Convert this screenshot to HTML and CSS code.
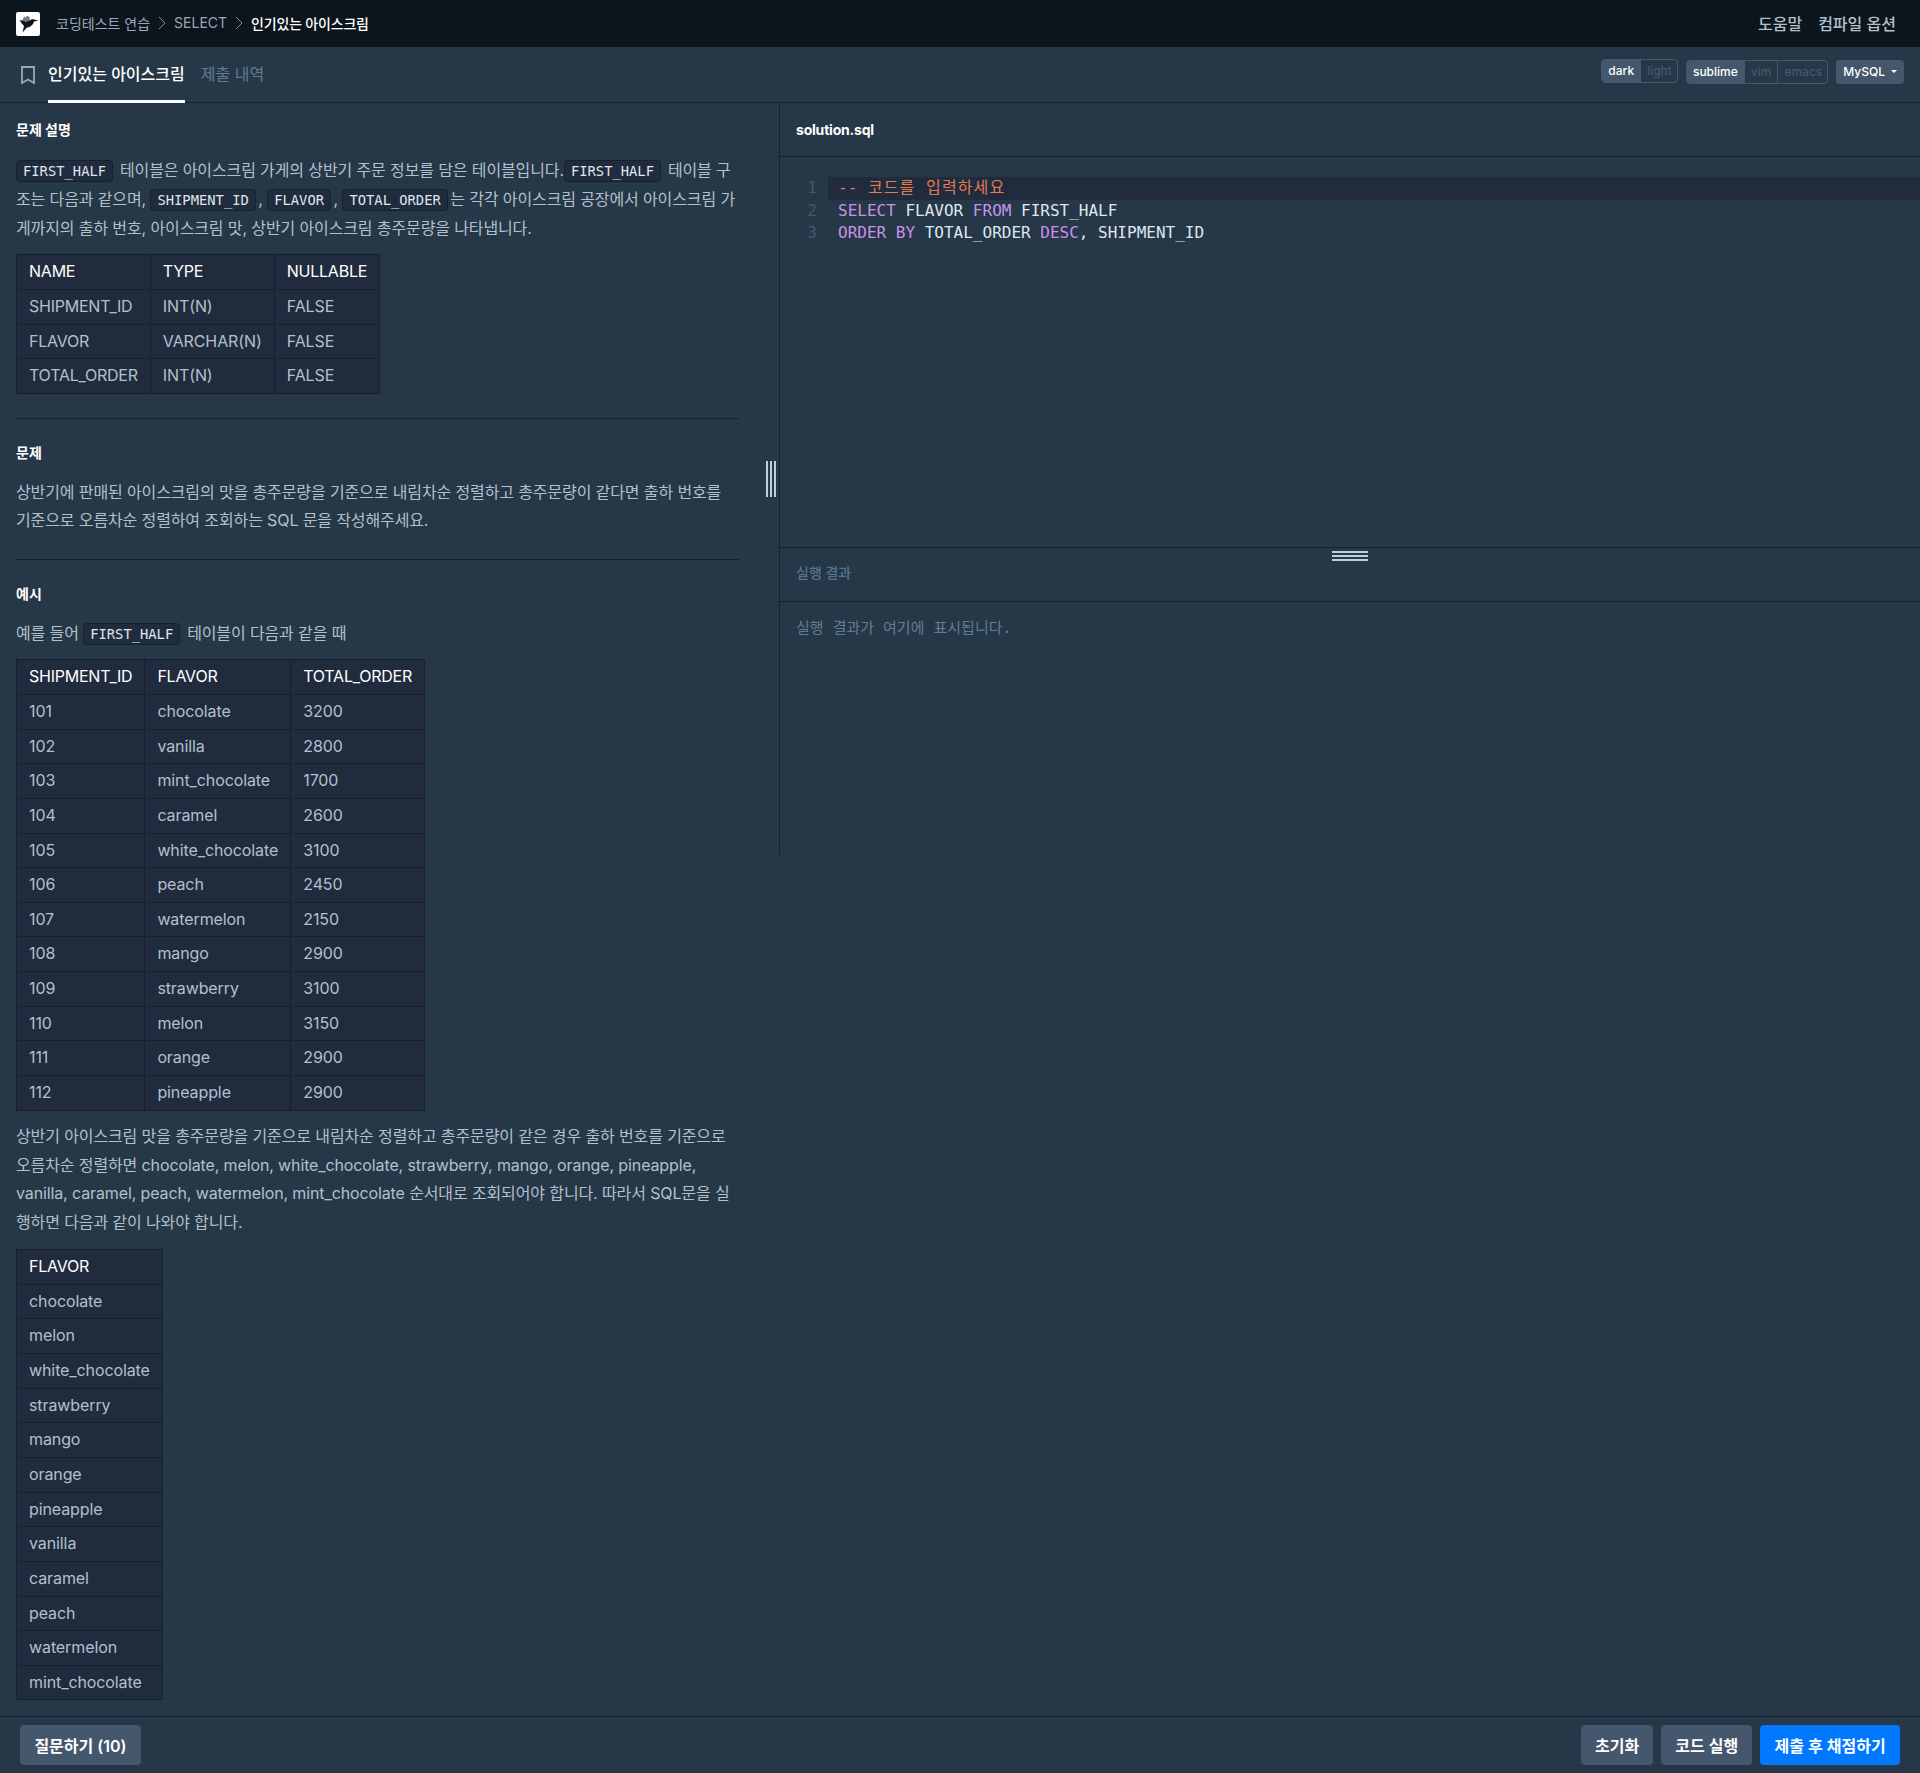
FILE: index.html
```html
<!DOCTYPE html>
<html lang="ko">
<head>
  <meta charset="utf-8">
  <title>인기있는 아이스크림</title>
  <link rel="stylesheet" href="styles.css">
</head>
<body>
  <header class="topbar">
    <svg class="logo" viewBox="0 0 24 24" width="24" height="24">
      <rect width="24" height="24" rx="2" fill="#fff"/>
      <path d="M6 9l2-4.500 2 1 1-2 2.500 1.500.5 4z" fill="#76808a"/>
      <path d="M3.500 8l6.500 1.500 4-1 2-1.500 2 .5 4.500 1-4.500 1c-1 3.500-4 6-7 6l-4.500 5 1.500-6.500c-2-2-3.500-4-4.500-6z" fill="#0c151c"/>
    </svg>
    <nav class="crumbs">
      <a>코딩테스트 연습</a>
      <svg class="chev" viewBox="0 0 8 14" width="8" height="14"><path d="M1 1l6 6-6 6" fill="none" stroke="#78909c"/></svg>
      <a>SELECT</a>
      <svg class="chev" viewBox="0 0 8 14" width="8" height="14"><path d="M1 1l6 6-6 6" fill="none" stroke="#78909c"/></svg>
      <b>인기있는 아이스크림</b>
    </nav>
    <div class="toplinks">
      <a>도움말</a>
      <a>컴파일 옵션</a>
    </div>
  </header>

  <div class="tabbar">
    <svg class="mark" viewBox="0 0 14 18" width="14" height="18"><path d="M1 1h12v16l-6-3.500-6 3.500z" fill="none" stroke="#98a8b9" stroke-width="1.800"/></svg>
    <a class="tab active">인기있는 아이스크림</a>
    <a class="tab">제출 내역</a>
    <div class="settings">
      <div class="switch theme">
        <span class="on">dark</span><span>light</span>
      </div>
      <div class="switch">
        <span class="on">sublime</span><span>vim</span><span>emacs</span>
      </div>
      <div class="select">MySQL <i class="caret"></i></div>
    </div>
  </div>

  <main class="main">
    <section class="guide">
      <h6>문제 설명</h6>
      <p><code>FIRST_HALF</code> 테이블은 아이스크림 가게의 상반기 주문 정보를 담은 테이블입니다.<code>FIRST_HALF</code> 테이블 구조는 다음과 같으며, <code>SHIPMENT_ID</code>, <code>FLAVOR</code>, <code>TOTAL_ORDER</code>는 각각 아이스크림 공장에서 아이스크림 가게까지의 출하 번호, 아이스크림 맛, 상반기 아이스크림 총주문량을 나타냅니다.</p>
      <table class="caps">
        <tr><th>NAME</th><th>TYPE</th><th>NULLABLE</th></tr>
        <tr><td>SHIPMENT_ID</td><td>INT(N)</td><td>FALSE</td></tr>
        <tr><td>FLAVOR</td><td>VARCHAR(N)</td><td>FALSE</td></tr>
        <tr><td>TOTAL_ORDER</td><td>INT(N)</td><td>FALSE</td></tr>
      </table>
      <hr>
      <h6>문제</h6>
      <p>상반기에 판매된 아이스크림의 맛을 총주문량을 기준으로 내림차순 정렬하고 총주문량이 같다면 출하 번호를 기준으로 오름차순 정렬하여 조회하는 SQL 문을 작성해주세요.</p>
      <hr>
      <h6>예시</h6>
      <p>예를 들어 <code>FIRST_HALF</code> 테이블이 다음과 같을 때</p>
      <table>
        <tr><th>SHIPMENT_ID</th><th>FLAVOR</th><th>TOTAL_ORDER</th></tr>
        <tr><td>101</td><td>chocolate</td><td>3200</td></tr>
        <tr><td>102</td><td>vanilla</td><td>2800</td></tr>
        <tr><td>103</td><td>mint_chocolate</td><td>1700</td></tr>
        <tr><td>104</td><td>caramel</td><td>2600</td></tr>
        <tr><td>105</td><td>white_chocolate</td><td>3100</td></tr>
        <tr><td>106</td><td>peach</td><td>2450</td></tr>
        <tr><td>107</td><td>watermelon</td><td>2150</td></tr>
        <tr><td>108</td><td>mango</td><td>2900</td></tr>
        <tr><td>109</td><td>strawberry</td><td>3100</td></tr>
        <tr><td>110</td><td>melon</td><td>3150</td></tr>
        <tr><td>111</td><td>orange</td><td>2900</td></tr>
        <tr><td>112</td><td>pineapple</td><td>2900</td></tr>
      </table>
      <p class="after">상반기 아이스크림 맛을 총주문량을 기준으로 내림차순 정렬하고 총주문량이 같은 경우 출하 번호를 기준으로 오름차순 정렬하면 chocolate, melon, white_chocolate, strawberry, mango, orange, pineapple, vanilla, caramel, peach, watermelon, mint_chocolate 순서대로 조회되어야 합니다. 따라서 SQL문을 실행하면 다음과 같이 나와야 합니다.</p>
      <table>
        <tr><th>FLAVOR</th></tr>
        <tr><td>chocolate</td></tr>
        <tr><td>melon</td></tr>
        <tr><td>white_chocolate</td></tr>
        <tr><td>strawberry</td></tr>
        <tr><td>mango</td></tr>
        <tr><td>orange</td></tr>
        <tr><td>pineapple</td></tr>
        <tr><td>vanilla</td></tr>
        <tr><td>caramel</td></tr>
        <tr><td>peach</td></tr>
        <tr><td>watermelon</td></tr>
        <tr><td>mint_chocolate</td></tr>
      </table>
      <div class="gutter-v"></div>
    </section>

    <section class="work">
      <div class="pane-title">solution.sql</div>
      <div class="editor">
        <div class="line active"><span class="num">1</span><span class="src com">-- <span class="ko">코드를 입력하세요</span></span></div>
        <div class="line"><span class="num">2</span><span class="src"><em>SELECT</em> FLAVOR <em>FROM</em> FIRST_HALF</span></div>
        <div class="line"><span class="num">3</span><span class="src"><em>ORDER BY</em> TOTAL_ORDER <em>DESC</em>, SHIPMENT_ID</span></div>
      </div>
      <div class="result-head">
        실행 결과
        <div class="gutter-h"></div>
      </div>
      <div class="result">실행 결과가 여기에 표시됩니다.</div>
    </section>
  </main>

  <footer class="footer">
    <button class="btn">질문하기 (10)</button>
    <div class="actions">
      <button class="btn">초기화</button>
      <button class="btn">코드 실행</button>
      <button class="btn primary">제출 후 채점하기</button>
    </div>
  </footer>
</body>
</html>
```

FILE: styles.css
```css
* {
  box-sizing: border-box;
}
html, body {
  margin: 0;
  height: 100%;
}
body {
  display: flex;
  flex-direction: column;
  height: 1773px;
  overflow: hidden;
  background: #263747;
  color: #b2c0cc;
  font-family: Inter, "Noto Sans CJK KR", sans-serif;
  font-size: 16px;
}

.topbar {
  flex: none;
  display: flex;
  align-items: center;
  height: 47px;
  padding: 0 24px 2px 16px;
  background: #0c151c;
  font-size: 14px;
}
.logo {
  margin-top: 2px;
}
.crumbs {
  display: flex;
  align-items: center;
  gap: 8px;
  margin-left: 16px;
  color: #98a8b9;
}
.crumbs b {
  color: #fff;
  font-weight: 500;
  letter-spacing: -.2px;
}
.chev {
  margin-top: 1px;
}
.toplinks {
  display: flex;
  gap: 16px;
  margin-left: auto;
  font-size: 16px;
  font-weight: 500;
  color: #b2c0cc;
}

.tabbar {
  flex: none;
  display: flex;
  align-items: stretch;
  height: 56px;
  padding: 0 16px 0 21px;
  border-bottom: 1px solid #172033;
}
.mark {
  align-self: center;
  margin-right: 13px;
}
.tab {
  display: flex;
  align-items: center;
  margin-right: 16px;
  margin-bottom: -1px;
  padding-bottom: 2px;
  color: #5f7f90;
  border-bottom: 3px solid transparent;
  font-size: 16px;
}
.tab.active {
  color: #fff;
  font-weight: 500;
  border-bottom-color: #fff;
}
.settings {
  display: flex;
  align-items: center;
  gap: 8px;
  margin-left: auto;
  padding-bottom: 6px;
  font-size: 12px;
  font-weight: 500;
}
.switch {
  display: flex;
  height: 24px;
  border: 1px solid #44576c;
  border-radius: 4px;
  overflow: hidden;
  color: #44576c;
}
.switch.theme {
  margin-top: -2px;
}
.switch span {
  display: flex;
  align-items: center;
  padding: 0 6px;
  border-right: 1px solid #44576c;
}
.switch span:last-child {
  padding-right: 5px;
  border-right: 0;
}
.switch .on {
  background: #44576c;
  color: #fff;
}
.select {
  display: flex;
  align-items: center;
  gap: 6px;
  height: 24px;
  padding: 0 7px;
  border-radius: 4px;
  background: #44576c;
  color: #fff;
}
.caret {
  border-top: 3px solid #fff;
  border-left: 3px solid transparent;
  border-right: 3px solid transparent;
}

.main {
  flex: 1;
  display: flex;
  align-items: flex-start;
  min-height: 0;
}
.guide {
  position: relative;
  width: 779px;
  padding: 0 40px 0 16px;
}
h6 {
  margin: 0;
  padding-top: 16px;
  font-size: 14px;
  line-height: 22px;
  font-weight: 700;
  color: #fff;
}
hr + h6 {
  padding-top: 23px;
}
.guide p {
  margin: 14px 0 0;
  font-size: 16px;
  line-height: 28.8px;
  letter-spacing: -.12px;
  color: #b2c0cc;
}
.guide h6:first-child + p {
  margin-top: 15px;
}
.guide hr + h6 + p {
  line-height: 28.4px;
}
.guide p.after {
  margin-top: 11px;
}
code {
  display: inline-block;
  margin-right: 2.5px;
  padding: 0 6px;
  border: 1px solid #172033;
  border-radius: 4px;
  background: #202b3d;
  font-family: "DejaVu Sans Mono", "Noto Sans CJK KR", monospace;
  font-size: 13.8px;
  line-height: 20px;
  letter-spacing: 0;
  color: #dfe6ee;
}
table {
  border-collapse: collapse;
  margin-top: 12px;
  background: #202b3d;
}
th, td {
  padding: 6px 12px;
  border: 1px solid #172033;
  font-size: 16px;
  font-weight: 400;
  line-height: 21.65px;
  letter-spacing: -.1px;
  text-align: left;
  color: #b2c0cc;
  white-space: nowrap;
}
th, .caps td:first-child {
  letter-spacing: -.23px;
}
th {
  color: #fff;
}
hr {
  height: 1px;
  margin: 24px 0 0;
  border: 0;
  background: #172033;
}
.gutter-v {
  position: absolute;
  top: 358px;
  right: 3px;
  width: 10px;
  height: 36px;
  border-left: 2px solid #c0ced9;
  border-right: 2px solid #c0ced9;
  background: linear-gradient(#c0ced9, #c0ced9) center / 2px 100% no-repeat;
}

.work {
  flex: 1;
  height: 752px;
  border-left: 1px solid #172033;
}
.pane-title {
  height: 54px;
  padding: 0 16px;
  border-bottom: 1px solid #172033;
  font-size: 14px;
  font-weight: 700;
  letter-spacing: -.2px;
  line-height: 54px;
  color: #fff;
}
.editor {
  height: 391px;
  padding-top: 20px;
  border-bottom: 1px solid #172033;
  font-family: "DejaVu Sans Mono", "Noto Sans CJK KR", monospace;
  font-size: 16px;
  line-height: 22.5px;
  color: #dfe6ee;
}
.line {
  display: flex;
  height: 22.5px;
  white-space: pre;
}
.num {
  flex: none;
  width: 48px;
  padding-right: 11px;
  text-align: right;
  color: #44576c;
}
.src {
  flex: 1;
  padding-left: 10px;
}
.active .src {
  background: #202b3d;
}
.com {
  color: #e07b4f;
}
.ko {
  margin-left: 1px;
  letter-spacing: 1.1px;
}
em {
  font-style: normal;
  color: #c792ea;
}
.result-head {
  position: relative;
  height: 54px;
  padding: 0 16px;
  border-bottom: 1px solid #172033;
  font-size: 14px;
  font-weight: 500;
  line-height: 50px;
  color: #56758f;
}
.gutter-h {
  position: absolute;
  top: 3px;
  left: 552px;
  width: 36px;
  height: 10px;
  border-top: 2px solid #c0ced9;
  border-bottom: 2px solid #c0ced9;
  background: linear-gradient(#c0ced9, #c0ced9) center / 100% 2px no-repeat;
}
.result {
  padding: 15px 16px;
  font-family: "DejaVu Sans Mono", "Noto Sans CJK KR", monospace;
  font-size: 15px;
  line-height: 22px;
  color: #5f7f90;
}

.footer {
  flex: none;
  display: flex;
  justify-content: space-between;
  align-items: center;
  height: 57px;
  padding: 0 20px;
  border-top: 1px solid #172033;
}
.actions {
  display: flex;
  gap: 8px;
}
.btn {
  height: 40px;
  padding: 0 14px 1px;
  border: 0;
  border-radius: 4px;
  background: #44576c;
  color: #fff;
  font-family: inherit;
  font-size: 16px;
  font-weight: 600;
}
.footer > .btn, .btn.primary {
  padding: 0 14.4px 1px;
}
.btn.primary {
  background: #0078ff;
}
```
